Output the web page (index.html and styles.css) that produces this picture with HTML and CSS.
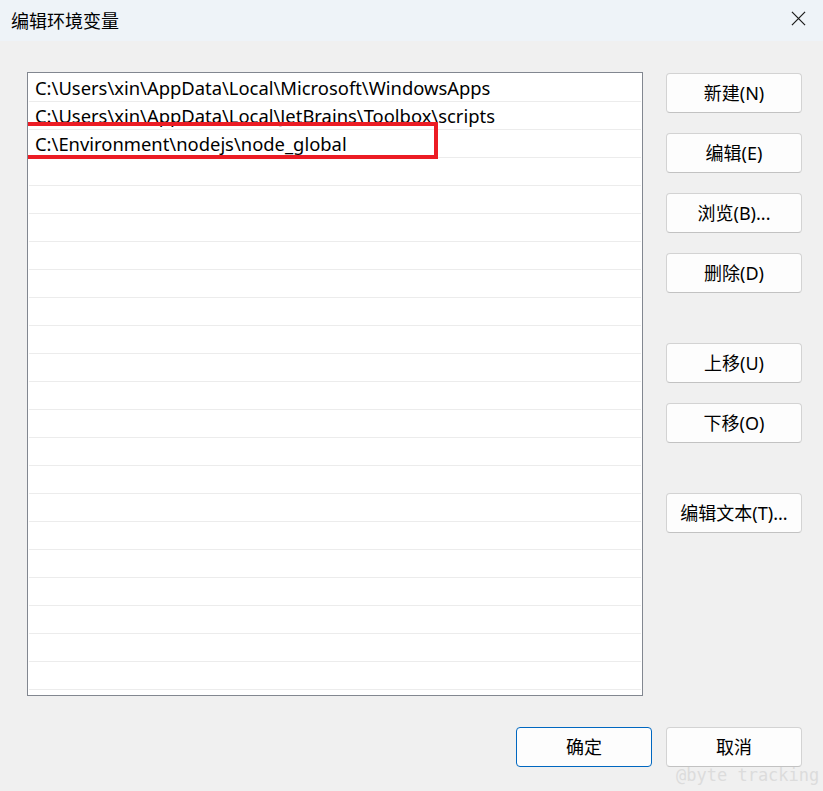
FILE: index.html
```html
<!DOCTYPE html>
<html lang="zh-CN">
<head>
<meta charset="utf-8">
<title>编辑环境变量</title>
<link rel="stylesheet" href="styles.css">
</head>
<body>
<div class="window">
  <div class="titlebar">
    <span class="title">编辑环境变量</span>
    <svg class="close" width="16" height="16" viewBox="0 0 16 16"><path d="M1 1 L15 15 M15 1 L1 15" stroke="#1a1a1a" stroke-width="1.3" fill="none"/></svg>
  </div>
  <div class="main">
    <div class="list">
      <div class="row">C:\Users\xin\AppData\Local\Microsoft\WindowsApps</div>
      <div class="row">C:\Users\xin\AppData\Local\JetBrains\Toolbox\scripts</div>
      <div class="row marked">C:\Environment\nodejs\node_global<span class="redbox"></span></div>
      <div class="row"></div><div class="row"></div><div class="row"></div><div class="row"></div>
      <div class="row"></div><div class="row"></div><div class="row"></div><div class="row"></div>
      <div class="row"></div><div class="row"></div><div class="row"></div><div class="row"></div>
      <div class="row"></div><div class="row"></div><div class="row"></div><div class="row"></div>
      <div class="row"></div><div class="row"></div><div class="row"></div>
    </div>
    <div class="side">
      <div class="group">
        <button class="btn">新建(N)</button>
        <button class="btn">编辑(E)</button>
        <button class="btn">浏览(B)...</button>
        <button class="btn">删除(D)</button>
      </div>
      <div class="group">
        <button class="btn">上移(U)</button>
        <button class="btn">下移(O)</button>
      </div>
      <div class="group">
        <button class="btn">编辑文本(T)...</button>
      </div>
    </div>
  </div>
  <div class="footer">
    <button class="btn primary">确定</button>
    <button class="btn">取消</button>
  </div>
  <div class="watermark">@byte tracking</div>
</div>
</body>
</html>
```
FILE: styles.css
```css
html, body {
  margin: 0;
  padding: 0;
}
body {
  width: 823px;
  height: 791px;
  overflow: hidden;
  background: #f0f0f0;
  font-family: "Noto Sans", "Noto Sans CJK SC", sans-serif;
  color: #000;
}
.window {
  position: relative;
  width: 823px;
  height: 791px;
}
.titlebar {
  height: 41px;
  background: #eef3f8;
  display: flex;
  align-items: center;
  justify-content: space-between;
  padding: 0 17px 0 11px;
  box-sizing: border-box;
}
.title {
  font-size: 18px;
  font-family: "Noto Sans CJK SC", sans-serif;
  line-height: 1;
  margin-top: -2px;
}
.close {
  margin-top: -4px;
  width: 15px;
  height: 15px;
}
.main {
  display: flex;
  padding: 31px 0 0 27px;
  gap: 23px;
}
.list {
  width: 616px;
  height: 624px;
  box-sizing: border-box;
  border: 1px solid #828790;
  background: #fff;
  padding: 1px 1px 0;
  overflow: hidden;
}
.row {
  position: relative;
  height: 28px;
  box-sizing: border-box;
  border-bottom: 1px solid #ececec;
  padding-left: 6px;
  font-size: 18.4px;
  line-height: 28px;
  white-space: nowrap;
}
.redbox {
  position: absolute;
  left: -5px;
  top: -8px;
  width: 414px;
  height: 37px;
  box-sizing: border-box;
  border: 4px solid #ec1c24;
}
.side {
  display: flex;
  flex-direction: column;
  gap: 50px;
  padding-top: 1px;
}
.group {
  display: flex;
  flex-direction: column;
  gap: 20px;
}
.btn {
  width: 136px;
  height: 40px;
  box-sizing: border-box;
  background: #fdfdfd;
  border: 1px solid #d3d3d3;
  border-bottom-color: #c2c2c2;
  border-radius: 4px;
  font-family: "Noto Sans", "Noto Sans CJK SC", sans-serif;
  font-size: 18px;
  color: #000;
  padding: 0;
  line-height: 1;
}
.footer {
  display: flex;
  justify-content: flex-end;
  gap: 14px;
  padding: 31px 21px 0 0;
}
.btn.primary {
  border: 1px solid #0067c0;
}
.watermark {
  position: absolute;
  left: 676px;
  top: 765px;
  font-family: "DejaVu Sans Mono", monospace;
  font-size: 17px;
  color: #dcdcdc;
  white-space: nowrap;
}
```
